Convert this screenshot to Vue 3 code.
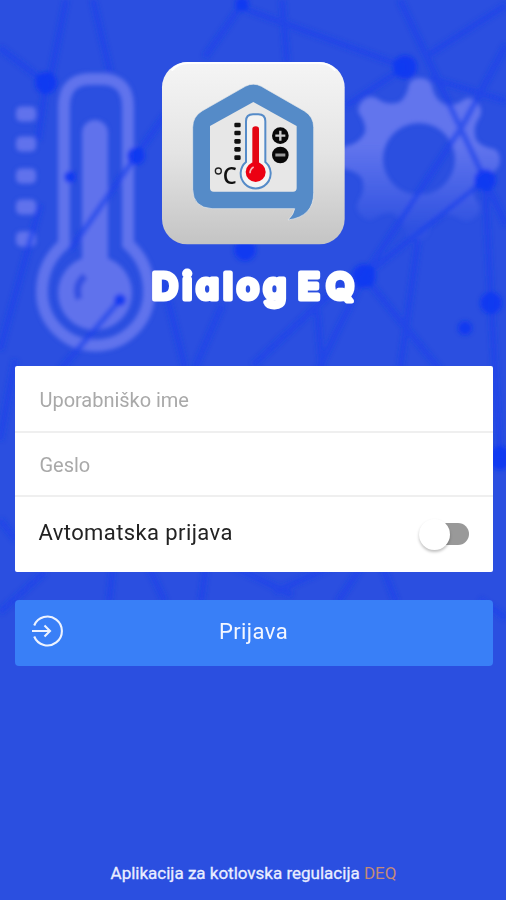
<script setup>
import { ref } from 'vue'

const username = ref('')
const password = ref('')
const autoLogin = ref(false)

const links = [
  'M66 0 50 80', 'M93 0 110 72', 'M242 4 205 57', 'M242 8 405 67', 'M400 0 485 180',
  'M430 54 506 5', 'M282 0 287 62', 'M405 67 346 106', 'M430 78 506 101', 'M506 45 463 125 364 276',
  'M485 180 364 276', 'M485 180 491 303 500 458', 'M418 240 400 370', 'M364 276 440 370', 'M364 276 318 370',
  'M345 280 253 365', 'M317 310 322 370', 'M0 48 46 83', 'M46 83 38 140', 'M40 205 0 350',
  'M165 115 136 156 70 250', 'M120 300 60 370', 'M163 280 185 368', 'M222 305 195 368', 'M485 180 506 225',
  'M45 572 0 612', 'M113 565 109 602', 'M148 565 165 602', 'M206 565 201 602', 'M230 565 292 595',
  'M335 565 275 592', 'M362 565 338 602', 'M382 565 396 602', 'M480 600 506 618', 'M0 440 15 360', 'M0 520 16 540'
]

const nodes = [
  [46, 83, 11], [136, 156, 9], [70, 177, 6], [245, 250, 11], [405, 67, 12], [485, 180, 11],
  [364, 276, 12], [491, 303, 11], [465, 328, 7], [120, 300, 6], [242, 4, 7], [500, 458, 12]
]

const ticks = [114, 144, 176, 207, 239]
const scaleMarks = [195, 219, 244, 268, 293]
const teeth = [0, 45, 90, 135, 180, 225, 270, 315]
</script>

<template>
  <main class="screen">
    <svg class="backdrop" viewBox="0 0 506 900" aria-hidden="true">
      <defs>
        <filter id="soft" x="-10%" y="-10%" width="120%" height="120%"><feGaussianBlur stdDeviation="2" /></filter>
        <linearGradient id="fade" x1="0" y1="0" x2="0" y2="1">
          <stop offset="0.45" stop-color="#fff" /><stop offset="0.85" stop-color="#111" />
        </linearGradient>
        <mask id="hole" maskUnits="userSpaceOnUse" x="320" y="50" width="186" height="210">
          <rect x="320" y="50" width="186" height="210" fill="url(#fade)" />
          <circle cx="419" cy="159" r="36" fill="#000" />
        </mask>
      </defs>
      <g filter="url(#soft)">
        <path d="M64 244V107Q64 79 91 79H101Q128 79 128 107V244Q149 263 149 292A53 53 0 0 1 42 292Q42 263 64 244Z" fill="none" stroke="#6173ec" stroke-width="12" />
        <g fill="#6072ec">
          <rect x="82" y="120" width="26" height="160" rx="13" />
          <circle cx="95" cy="293" r="37" />
          <rect v-for="y in ticks" :key="y" x="16" :y="y - 7.5" width="20" height="15" rx="5" />
        </g>
        <path d="M85 276Q74 285 79 299" fill="none" stroke="#304fe2" stroke-width="7" />
        <g mask="url(#hole)" fill="#6275ed">
          <circle cx="419" cy="159" r="60" />
          <path v-for="a in teeth" :key="a" d="M391 109 401 101Q407 96 409 84Q412 78 420 78Q429 78 432 86Q434 97 441 102L451 109Z" :transform="`rotate(${a} 419 159)`" />
        </g>
        <g class="links"><path v-for="d in links" :key="d" :d="d" /></g>
        <circle v-for="([x, y, r], i) in nodes" :key="i" class="node" :cx="x" :cy="y" :r="r" />
      </g>
    </svg>

    <header class="brand">
      <svg class="app-icon" viewBox="0 0 570 570" aria-hidden="true">
        <defs>
          <linearGradient id="tile" x1="0" y1="0" x2="0" y2="1">
            <stop offset="0" stop-color="#f5f5f5" /><stop offset="0.5" stop-color="#e4e4e4" /><stop offset="1" stop-color="#c4c4c4" />
          </linearGradient>
        </defs>
        <rect x="6" y="6" width="548" height="547" rx="76" fill="url(#tile)" />
        <path d="M35 32Q54 9 84 9H476Q508 9 526 32" fill="none" stroke="#fff" stroke-width="6" />
        <path d="M256 79Q280 66 304 79L433 153Q461 170 461 202V398Q461 470 384 480Q401 464 404 446H156Q99 443 98 388V202Q98 170 126 153Z" fill="#558bc8" stroke="#ececec" stroke-width="2" />
        <path d="M280 126 410 198V384Q410 395 399 395H161Q150 395 150 384V198Z" fill="#e7e7e7" />
        <path d="M258 306V184Q258 163 279 163H295Q316 163 316 184V306A45 45 0 1 1 258 306Z" fill="#f3f3f3" stroke="#558bc8" stroke-width="6" />
        <path d="M277 315V207Q277 199 287 199Q297 199 297 207V315Z" fill="#e40613" />
        <circle cx="287" cy="336" r="30" fill="#ec0012" />
        <path d="M281 321Q270 327 270 340" fill="none" stroke="#f8b4b7" stroke-width="5" />
        <rect v-for="y in scaleMarks" :key="y" x="223" :y="y - 7" width="19" height="14" rx="4" fill="#111" />
        <circle cx="361" cy="227" r="25" fill="#080808" /><circle cx="361" cy="285" r="25" fill="#080808" />
        <path d="M361 212V242M346 227H376" stroke="#ccc" stroke-width="7" />
        <path d="M346 285H376" stroke="#999" stroke-width="9" />
        <circle cx="175" cy="333" r="9" fill="none" stroke="#222" stroke-width="4" />
        <text x="188" y="373" class="unit" textLength="42" lengthAdjust="spacingAndGlyphs">C</text>
      </svg>
      <svg class="wordmark" viewBox="0 0 220 60" role="img" aria-label="Dialog EQ">
        <text x="8" y="42" textLength="134" lengthAdjust="spacing">Dialog</text>
        <text x="154" y="42" textLength="56" lengthAdjust="spacing">EQ</text>
      </svg>
    </header>

    <form class="login" @submit.prevent>
      <div class="fields">
        <input v-model="username" class="field" type="text" placeholder="Uporabniško ime" />
        <input v-model="password" class="field second" type="password" placeholder="Geslo" />
        <div class="auto">
          <span class="auto-text">Avtomatska prijava</span>
          <button type="button" class="switch" :class="{ on: autoLogin }" role="switch" :aria-checked="autoLogin" @click="autoLogin = !autoLogin"><i class="knob" /></button>
        </div>
      </div>
      <button class="submit" type="submit">
        <svg class="enter" viewBox="0 0 32 32" aria-hidden="true">
          <path d="M3.2 10.5A14.4 14.4 0 1 1 3.2 21.5M1 16H19M13.5 10.5 19 16 13.5 21.5" />
        </svg>
        <span class="submit-text">Prijava</span>
      </button>
    </form>

    <footer class="foot"><span class="foot-text">Aplikacija za kotlovska regulacija</span> <a class="deq">DEQ</a></footer>
  </main>
</template>

<style>
body { margin: 0; background: #2b4fe0; }
</style>

<style scoped>
.screen { position: relative; box-sizing: border-box; width: 506px; height: 900px; padding: 60px 13.5px 15px 14.5px; overflow: hidden; display: flex; flex-direction: column; background: #2b4fe0; font-family: Roboto, sans-serif; }
.backdrop { position: absolute; inset: 0; width: 506px; height: 900px; }
.links { fill: none; stroke: #1a41ec; stroke-width: 6; opacity: .65; }
.node { fill: #1139f2; opacity: .9; }
.brand, .login, .foot { position: relative; }
.brand { height: 306px; display: flex; flex-direction: column; align-items: center; }
.app-icon { width: 190px; height: 190px; margin-left: 3px; flex: none; }
.wordmark { width: 220px; height: 60px; margin-top: 7px; overflow: visible; }
.wordmark text { font: 600 36px Inter, sans-serif; font-feature-settings: "cv11"; fill: #fff; stroke: #fff; stroke-width: 5; stroke-linejoin: round; stroke-linecap: round; }
.unit { font: 600 68px "Open Sans", sans-serif; fill: #111; }
.fields { height: 206px; box-sizing: border-box; background: #fff; border-radius: 2px; display: flex; flex-direction: column; }
.field { box-sizing: border-box; width: 100%; height: 67px; padding: 2px 25px 0; border: 0; border-bottom: 2px solid #efefef; background: transparent; font: 400 20px Roboto, sans-serif; letter-spacing: -.03px; outline: 0; }
.field::placeholder { color: #a9a9a9; opacity: 1; }
.second { height: 64px; padding-top: 2px; }
.auto { flex: 1; display: flex; align-items: center; justify-content: space-between; padding: 0 24px 0 24px; font-size: 22px; letter-spacing: .4px; color: #222; }
.auto-text { margin-top: -4px; }
.switch { display: flex; align-items: center; width: 46px; height: 22px; margin-top: -1px; padding: 0; border: 0; border-radius: 11px; background: #999; }
.knob { width: 31px; height: 31px; flex: none; margin-left: -4px; border-radius: 50%; background: #fff; box-shadow: 0 2px 3px rgba(0, 0, 0, .25); }
.switch.on .knob { margin-left: 19px; }
.submit { display: grid; grid-template-columns: 32px 1fr 32px; align-items: center; width: 100%; height: 66px; margin-top: 27.5px; padding: 0 17px; border: 0; border-radius: 4px; background: #397ff7; color: #f4f7ff; font: 400 22px Roboto, sans-serif; letter-spacing: .4px; }
.enter { width: 32px; height: 32px; margin: -4px 0 0 -1px; fill: none; stroke: #edf3ff; stroke-width: 2.1; }
.submit-text { margin-top: -3px; }
.foot { margin-top: auto; text-align: center; font-size: 17px; line-height: 24px; color: #e9edff; }
.foot-text { -webkit-text-stroke: .3px #e9edff; }
.deq { color: #c38a78; }
</style>
